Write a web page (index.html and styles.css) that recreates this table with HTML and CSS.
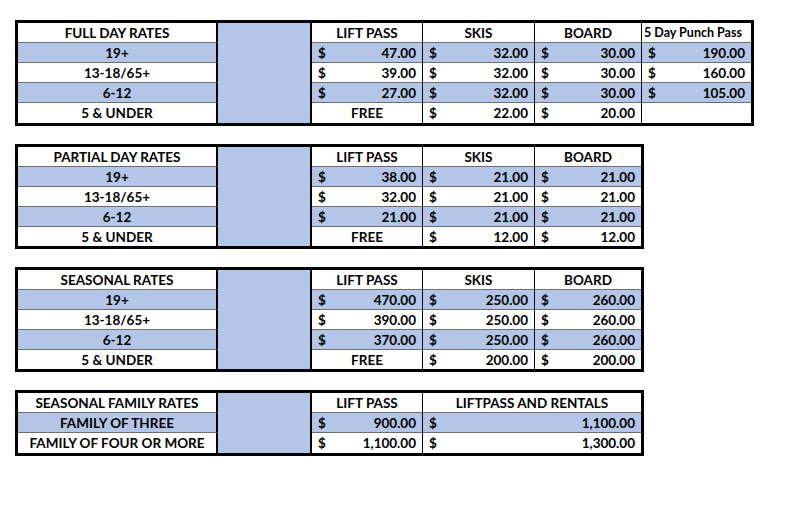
FILE: index.html
```html
<!DOCTYPE html>
<html>
<head>
<meta charset="utf-8">
<link rel="stylesheet" href="styles.css">
</head>
<body>
<div class="page">

  <div class="sheet s6">
    <div class="blue r5"></div>
    <div class="c lbl">FULL DAY RATES</div>
    <div class="c hd">LIFT PASS</div>
    <div class="c hd">SKIS</div>
    <div class="c hd">BOARD</div>
    <div class="c hd punch last">5 Day Punch Pass</div>

    <div class="c lbl b">19+</div>
    <div class="c m b"><span>$</span><span>47.00</span></div>
    <div class="c m b"><span>$</span><span>32.00</span></div>
    <div class="c m b"><span>$</span><span>30.00</span></div>
    <div class="c m b last"><span>$</span><span>190.00</span></div>

    <div class="c lbl">13-18/65+</div>
    <div class="c m"><span>$</span><span>39.00</span></div>
    <div class="c m"><span>$</span><span>32.00</span></div>
    <div class="c m"><span>$</span><span>30.00</span></div>
    <div class="c m last"><span>$</span><span>160.00</span></div>

    <div class="c lbl b">6-12</div>
    <div class="c m b"><span>$</span><span>27.00</span></div>
    <div class="c m b"><span>$</span><span>32.00</span></div>
    <div class="c m b"><span>$</span><span>30.00</span></div>
    <div class="c m b last"><span>$</span><span>105.00</span></div>

    <div class="c lbl end">5 &amp; UNDER</div>
    <div class="c hd end">FREE</div>
    <div class="c m end"><span>$</span><span>22.00</span></div>
    <div class="c m end"><span>$</span><span>20.00</span></div>
    <div class="c end last"></div>
  </div>

  <div class="sheet s5">
    <div class="blue r5"></div>
    <div class="c lbl">PARTIAL DAY RATES</div>
    <div class="c hd">LIFT PASS</div>
    <div class="c hd">SKIS</div>
    <div class="c hd last">BOARD</div>

    <div class="c lbl b">19+</div>
    <div class="c m b"><span>$</span><span>38.00</span></div>
    <div class="c m b"><span>$</span><span>21.00</span></div>
    <div class="c m b last"><span>$</span><span>21.00</span></div>

    <div class="c lbl">13-18/65+</div>
    <div class="c m"><span>$</span><span>32.00</span></div>
    <div class="c m"><span>$</span><span>21.00</span></div>
    <div class="c m last"><span>$</span><span>21.00</span></div>

    <div class="c lbl b">6-12</div>
    <div class="c m b"><span>$</span><span>21.00</span></div>
    <div class="c m b"><span>$</span><span>21.00</span></div>
    <div class="c m b last"><span>$</span><span>21.00</span></div>

    <div class="c lbl end">5 &amp; UNDER</div>
    <div class="c hd end">FREE</div>
    <div class="c m end"><span>$</span><span>12.00</span></div>
    <div class="c m end last"><span>$</span><span>12.00</span></div>
  </div>

  <div class="sheet s5">
    <div class="blue r5"></div>
    <div class="c lbl">SEASONAL RATES</div>
    <div class="c hd">LIFT PASS</div>
    <div class="c hd">SKIS</div>
    <div class="c hd last">BOARD</div>

    <div class="c lbl b">19+</div>
    <div class="c m b"><span>$</span><span>470.00</span></div>
    <div class="c m b"><span>$</span><span>250.00</span></div>
    <div class="c m b last"><span>$</span><span>260.00</span></div>

    <div class="c lbl">13-18/65+</div>
    <div class="c m"><span>$</span><span>390.00</span></div>
    <div class="c m"><span>$</span><span>250.00</span></div>
    <div class="c m last"><span>$</span><span>260.00</span></div>

    <div class="c lbl b">6-12</div>
    <div class="c m b"><span>$</span><span>370.00</span></div>
    <div class="c m b"><span>$</span><span>250.00</span></div>
    <div class="c m b last"><span>$</span><span>260.00</span></div>

    <div class="c lbl end">5 &amp; UNDER</div>
    <div class="c hd end">FREE</div>
    <div class="c m end"><span>$</span><span>200.00</span></div>
    <div class="c m end last"><span>$</span><span>200.00</span></div>
  </div>

  <div class="sheet s4">
    <div class="blue r3"></div>
    <div class="c lbl">SEASONAL FAMILY RATES</div>
    <div class="c hd">LIFT PASS</div>
    <div class="c hd last">LIFTPASS AND RENTALS</div>

    <div class="c lbl b">FAMILY OF THREE</div>
    <div class="c m b"><span>$</span><span>900.00</span></div>
    <div class="c m b last"><span>$</span><span>1,100.00</span></div>

    <div class="c lbl end">FAMILY OF FOUR OR MORE</div>
    <div class="c m end"><span>$</span><span>1,100.00</span></div>
    <div class="c m end last"><span>$</span><span>1,300.00</span></div>
  </div>

</div>
</body>
</html>
```

FILE: styles.css
```css
html, body {
  margin: 0;
  padding: 0;
  background: #ffffff;
}

.page {
  padding: 20px 0 0 15px;
  display: flex;
  flex-direction: column;
  align-items: flex-start;
  gap: 18px;
  font-family: "Lato", "Liberation Sans", sans-serif;
  font-weight: bold;
  font-size: 13.5px;
  color: #000;
}

.sheet {
  display: grid;
  border: 3px solid #000;
  background: #fff;
}

.s6 {
  grid-template-columns: 200px 94px 111px 112px 107px 109px;
  grid-template-rows: 20px 20px 20px 20px 20px;
}

.s5 {
  grid-template-columns: 200px 94px 111px 112px 106px;
  grid-template-rows: 20px 20px 20px 20px 19px;
}

.s4 {
  grid-template-columns: 200px 94px 111px 218px;
  grid-template-rows: 20px 20px 20px;
}

.blue {
  grid-column: 2;
  background: #b4c6e7;
  border-right: 2px solid #000;
}

.blue.r5 { grid-row: 1 / 6; }
.blue.r3 { grid-row: 1 / 4; }

.c {
  box-sizing: border-box;
  border-right: 1px solid #000;
  border-bottom: 1px solid #6e6e6e;
  display: flex;
  align-items: center;
  padding-top: 2px;
  line-height: 1;
  white-space: nowrap;
}

.c.lbl {
  grid-column: 1;
  justify-content: center;
  border-right: 2px solid #000;
}

.c.hd {
  justify-content: center;
}

.c.punch {
  justify-content: flex-start;
  padding-left: 2px;
  font-size: 12.5px;
}

.c.m {
  justify-content: space-between;
  padding: 2px 6px 0 6px;
}

.c.b {
  background: #b4c6e7;
}

.c.last {
  border-right: none;
}

.c.end {
  border-bottom: none;
}
```
